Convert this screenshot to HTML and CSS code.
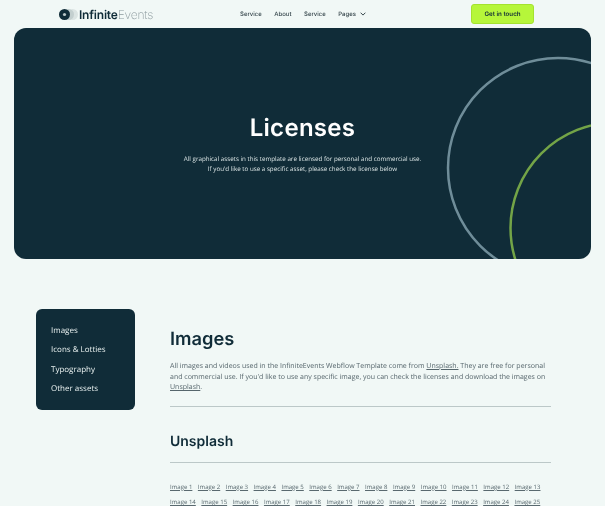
FILE: index.html
```html
<!DOCTYPE html>
<html lang="en">
<head>
<meta charset="utf-8">
<title>Licenses</title>
<link rel="stylesheet" href="styles.css">
</head>
<body>
<header class="nav">
  <a class="logo" href="#">
    <svg class="logo-mark" width="19" height="11" viewBox="0 0 19 11"><circle cx="13.500" cy="5.500" r="5.500" fill="#dbe4e3"/><circle cx="9.500" cy="5.500" r="5.500" fill="#c3cfcf"/><circle cx="5.500" cy="5.500" r="5.500" fill="#102c38"/><circle cx="5.500" cy="5.500" r="1.600" fill="#b9c6c7"/></svg>
    <span class="logo-a">Infinite</span><span class="logo-b">Events</span>
  </a>
  <nav class="menu">
    <a href="#">Service</a>
    <a href="#">About</a>
    <a href="#">Service</a>
    <a href="#" class="drop">Pages
      <svg width="6" height="4" viewBox="0 0 6 4"><path d="M.6.7 3 3.100 5.400.7" fill="none" stroke="#37474d" stroke-width="1"/></svg>
    </a>
  </nav>
  <a class="cta" href="#">Get in touch</a>
</header>

<section class="hero">
  <svg class="rings" viewBox="0 0 577 231" width="577" height="231">
    <circle cx="544" cy="140" r="110" fill="none" stroke="#6f8d99" stroke-width="2.500"/>
    <circle cx="602" cy="200" r="105.500" fill="none" stroke="#73a447" stroke-width="2.500"/>
  </svg>
  <h1>Licenses</h1>
  <p>All graphical assets in this template are licensed for personal and commercial use.<br>If you'd like to use a specific asset, please check the license below</p>
</section>

<main class="page">
  <aside class="side">
    <a href="#">Images</a>
    <a href="#">Icons &amp; Lotties</a>
    <a href="#">Typography</a>
    <a href="#">Other assets</a>
  </aside>
  <article class="content">
    <h2>Images</h2>
    <p class="lead">All images and videos used in the InfiniteEvents Webflow Template come from <a href="#">Unsplash.</a> They are free for personal and commercial use. If you'd like to use any specific image, you can check the licenses and download the images on <a href="#">Unsplash</a>.</p>
    <hr>
    <h3>Unsplash</h3>
    <hr>
    <div class="links">
      <a href="#">Image 1</a><a href="#">Image 2</a><a href="#">Image 3</a><a href="#">Image 4</a><a href="#">Image 5</a><a href="#">Image 6</a><a href="#">Image 7</a><a href="#">Image 8</a><a href="#">Image 9</a><a href="#">Image 10</a><a href="#">Image 11</a><a href="#">Image 12</a><a href="#">Image 13</a>
      <a href="#">Image 14</a><a href="#">Image 15</a><a href="#">Image 16</a><a href="#">Image 17</a><a href="#">Image 18</a><a href="#">Image 19</a><a href="#">Image 20</a><a href="#">Image 21</a><a href="#">Image 22</a><a href="#">Image 23</a><a href="#">Image 24</a><a href="#">Image 25</a>
    </div>
  </article>
</main>
</body>
</html>
```
FILE: styles.css
```css
* { box-sizing: border-box; }
html { background: #f1f8f6; }
html, body { height: 506px; overflow: hidden; }
body {
  margin: 0;
  background: #f1f8f6;
  color: #102c38;
  font-family: "Open Sans", sans-serif;
  text-rendering: geometricPrecision;
  filter: blur(0.3px);
}
a { color: inherit; }

.nav {
  height: 28px;
  display: flex;
  align-items: center;
  padding: 0 71px 0 59px;
}
.logo {
  display: flex;
  align-items: center;
  text-decoration: none;
  width: 181px;
  font-family: Inter, sans-serif;
  font-size: 12px;
  letter-spacing: -0.2px;
}
.logo-mark { margin-right: 1px; }
.logo-a { font-weight: 600; color: #102c38; }
.logo-b { font-weight: 200; color: #8c9a9e; }
.menu {
  display: flex;
  gap: 12.500px;
  flex: 1;
  font-family: Inter, sans-serif;
  font-size: 6px;
  font-weight: 500;
  color: #37474d;
}
.menu a { text-decoration: none; }
.drop { display: flex; align-items: center; gap: 4px; }
.cta {
  width: 63px;
  height: 20px;
  display: flex;
  align-items: center;
  justify-content: center;
  background: #b6f63a;
  border: 1px solid #a4e22f;
  border-radius: 3px;
  font-family: Inter, sans-serif;
  font-size: 6.200px;
  font-weight: 600;
  text-decoration: none;
  color: #102c38;
}

.hero {
  position: relative;
  overflow: hidden;
  height: 231px;
  margin: 0 14px;
  padding-top: 85px;
  background: #102c38;
  border-radius: 12px;
  text-align: center;
  color: #fff;
}
.rings { position: absolute; left: 0; top: 0; }
.hero h1 {
  position: relative;
  margin: 0;
  font-family: Inter, sans-serif;
  font-size: 24px;
  line-height: 30px;
  font-weight: 560;
  letter-spacing: 0.3px;
}
.hero p {
  position: relative;
  margin: 11px 0 0;
  font-size: 6.240px;
  line-height: 9.500px;
  color: #dbe5e5;
}

.page {
  display: flex;
  align-items: flex-start;
  padding: 50px 54px 0 36px;
}
.side {
  width: 99px;
  height: 101px;
  flex: none;
  margin-right: 35px;
  padding: 15.500px 15px;
  display: flex;
  flex-direction: column;
  gap: 7.500px;
  background: #102c38;
  border-radius: 6px;
  color: #e9f1f0;
  font-size: 8px;
  line-height: 12px;
}
.side a { text-decoration: none; }
.content { flex: 1; min-width: 0; }
.content h2 {
  margin: 18px 0 0;
  font-family: Inter, sans-serif;
  font-size: 18.300px;
  line-height: 24px;
  font-weight: 560;
}
.lead {
  margin: 11px 0 0;
  font-size: 7px;
  line-height: 10.600px;
  color: #56666c;
}
.content hr {
  margin: 0;
  border: 0;
  border-top: 1px solid #bcc8c8;
}
.lead + hr { margin-top: 12px; }
.content h3 {
  margin: 26px 0 12px;
  font-family: Inter, sans-serif;
  font-size: 14px;
  line-height: 17px;
  font-weight: 560;
}
.links {
  margin-top: 20px;
  display: flex;
  flex-wrap: wrap;
  gap: 7.500px 5.500px;
  font-size: 6.050px;
  line-height: 8px;
  color: #59696f;
}
```
